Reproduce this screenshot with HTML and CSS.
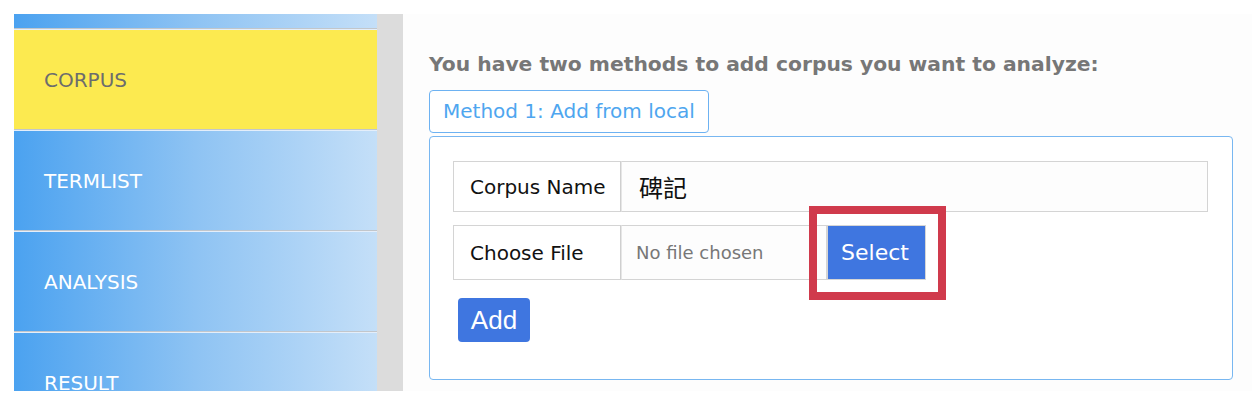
FILE: index.html
```html
<!DOCTYPE html>
<html lang="en">
<head>
<meta charset="utf-8">
<title>Corpus</title>
<link rel="stylesheet" href="styles.css">
</head>
<body>
<div class="page">
  <nav class="sidebar">
    <div class="nav-item nav-top"></div>
    <div class="nav-item active">CORPUS</div>
    <div class="nav-item">TERMLIST</div>
    <div class="nav-item">ANALYSIS</div>
    <div class="nav-item">RESULT</div>
  </nav>
  <div class="track"></div>
  <main class="main">
    <h2 class="heading">You have two methods to add corpus you want to analyze:</h2>
    <div class="tab">Method 1: Add from local</div>
    <section class="panel">
      <div class="row row-name">
        <div class="label">Corpus Name</div>
        <div class="value name-value">碑記</div>
      </div>
      <div class="row row-file">
        <div class="label">Choose File</div>
        <div class="value file-value">No file chosen</div>
        <div class="select-wrap">
          <button class="select-btn">Select</button>
          <span class="highlight"></span>
        </div>
      </div>
      <button class="add-btn">Add</button>
    </section>
  </main>
</div>
</body>
</html>
```
FILE: styles.css
```css
* { box-sizing: border-box; }
html, body { margin: 0; padding: 0; background: #ffffff; }
body { font-family: "DejaVu Sans", Verdana, sans-serif; }

.page {
  display: flex;
  height: 391px;
  padding: 14px 6px 0 14px;
}

.sidebar {
  width: 363px;
  height: 377px;
  overflow: hidden;
  display: flex;
  flex-direction: column;
}

.nav-item {
  flex: none;
  height: 101px;
  display: flex;
  align-items: center;
  padding-left: 30px;
  font-size: 20px;
  color: #ffffff;
  background: linear-gradient(to right, #4ba2f0 0%, #8ec3f3 50%, #c4dff8 100%);
  border-top: 1px solid #e4eefa;
  border-bottom: 1px solid #c2c6cb;
}

.nav-top {
  height: 15px;
  border-top: none;
}

.nav-item.active {
  background: #fcea50;
  color: #6d6d6d;
}

.track {
  width: 26px;
  height: 377px;
  background: #dcdcdc;
  flex: none;
}

.main {
  flex: 1;
  height: 377px;
  background: #fdfdfd;
  padding: 38px 19px 0 26px;
}

.heading {
  margin: 0;
  font-size: 20.3px;
  line-height: 24px;
  font-weight: bold;
  color: #777777;
}

.tab {
  display: inline-block;
  margin-top: 14px;
  height: 43px;
  line-height: 41px;
  padding: 0 13px;
  border: 1px solid #6db2f2;
  border-radius: 4px;
  background: #ffffff;
  color: #4ea6ef;
  font-size: 20px;
}

.panel {
  margin-top: 3px;
  height: 244px;
  border: 1px solid #78b7f1;
  border-radius: 4px;
  background: #ffffff;
  padding: 24px 24px 0 23px;
}

.row {
  display: flex;
}

.row-name { height: 51px; }
.row-file { height: 55px; margin-top: 13px; }

.label {
  width: 168px;
  flex: none;
  display: flex;
  align-items: center;
  padding-left: 16px;
  font-size: 20px;
  color: #111111;
  border: 1px solid #d4d4d4;
  border-right: 1px solid #cfcfcf;
}

.value {
  display: flex;
  align-items: center;
  border: 1px solid #d4d4d4;
  border-left: 1px solid #e6e6e6;
  background: #fdfdfd;
}

.name-value {
  flex: 1;
  padding-left: 17px;
  font-family: "Noto Sans CJK TC", "Noto Sans CJK SC", sans-serif;
  font-size: 24px;
  color: #111111;
}

.file-value {
  width: 206px;
  flex: none;
  padding-left: 14px;
  font-size: 18px;
  color: #777777;
}

.select-wrap {
  position: relative;
  width: 99px;
  flex: none;
}

.select-btn {
  display: block;
  width: 99px;
  height: 55px;
  margin: 0;
  padding: 0 3px 0 0;
  border: 1px solid #d6d6d6;
  background: #3f76e0;
  color: #ffffff;
  font-family: "DejaVu Sans", Verdana, sans-serif;
  font-size: 22px;
}

.highlight {
  position: absolute;
  left: -18px;
  top: -19px;
  width: 137px;
  height: 94px;
  border: 8px solid #d03a4c;
}

.add-btn {
  display: block;
  margin: 18px 0 0 5px;
  width: 72px;
  height: 44px;
  padding: 0;
  border: none;
  border-radius: 4px;
  background: #3f76e0;
  color: #ffffff;
  font-family: "Liberation Sans", Arial, sans-serif;
  font-size: 26px;
}
```
